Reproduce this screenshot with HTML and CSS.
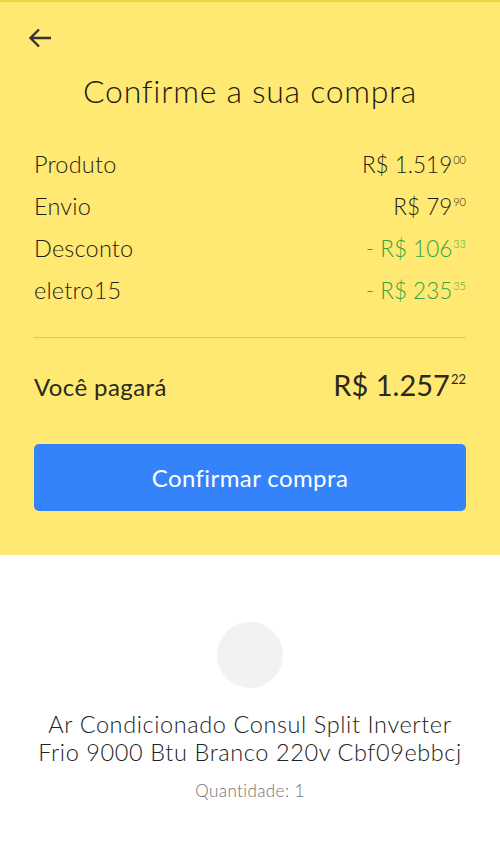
FILE: index.html
```html
<!DOCTYPE html>
<html lang="pt-BR">
<head>
<meta charset="utf-8">
<title>Confirme a sua compra</title>
<link rel="stylesheet" href="styles.css">
</head>
<body>
<div class="page">
  <section class="summary">
    <div class="topbar">
      <button class="back" aria-label="Voltar">
        <svg width="24" height="24" viewBox="0 0 24 24"><path d="M23 12H2.5M11 3.5L2.5 12L11 20.5" fill="none" stroke="#333" stroke-width="2.4"/></svg>
      </button>
    </div>
    <h1 class="title">Confirme a sua compra</h1>
    <ul class="lines">
      <li class="line"><span>Produto</span><span class="amt">R$ 1.519<sup>00</sup></span></li>
      <li class="line"><span>Envio</span><span class="amt">R$ 79<sup>90</sup></span></li>
      <li class="line"><span>Desconto</span><span class="amt green">- R$ 106<sup>33</sup></span></li>
      <li class="line"><span>eletro15</span><span class="amt green">- R$ 235<sup>35</sup></span></li>
    </ul>
    <div class="total">
      <span class="total-label">Você pagará</span>
      <span class="total-amt">R$ 1.257<sup>22</sup></span>
    </div>
    <button class="confirm">Confirmar compra</button>
  </section>
  <section class="product">
    <div class="thumb"></div>
    <p class="name">Ar Condicionado Consul Split Inverter Frio 9000 Btu Branco 220v Cbf09ebbcj</p>
    <p class="qty">Quantidade: 1</p>
  </section>
</div>
</body>
</html>
```

FILE: styles.css
```css
* { box-sizing: border-box; }
html, body { margin: 0; padding: 0; background: #fff; }
body { font-family: "Lato", "Open Sans", sans-serif; color: #333; }
.page { width: 500px; }
.summary {
  background: #ffe972;
  border-top: 2px solid #f2d43c;
  padding: 0 34px 44px;
  display: flex;
  flex-direction: column;
}
.topbar { height: 76px; display: flex; align-items: center; margin-top: -2px; }
.back { background: none; border: 0; padding: 0; margin-left: -6px; width: 24px; height: 24px; display: flex; }
.title {
  margin: -3px 0 0;
  text-align: center;
  font-weight: 300;
  font-size: 32px;
  line-height: 36px;
  color: #1c1b12;
  letter-spacing: 0.7px;
}
.lines { list-style: none; margin: 34px 0 0; padding: 0 0 26px; border-bottom: 1px solid #d8c56a; }
.line {
  display: flex;
  justify-content: space-between;
  align-items: baseline;
  height: 42px;
  line-height: 42px;
  font-size: 23.5px;
  font-weight: 300;
  color: #1f1e14;
  letter-spacing: 0.2px;
}
.amt { font-size: 22.5px; letter-spacing: 0; }
.amt sup, .total-amt sup { font-size: 11px; vertical-align: 9px; line-height: 0; margin-left: 1px; }
.green { color: #35a641; }
.total {
  display: flex;
  justify-content: space-between;
  align-items: baseline;
  height: 96px;
  padding-top: 32px;
  line-height: 30px;
}
.total-label { font-size: 24px; font-weight: 400; color: #2a2920; letter-spacing: 0.4px; }
.total-amt { font-size: 29px; font-weight: 400; color: #2a2920; }
.total-amt sup { font-size: 13px; vertical-align: 12px; }
.confirm {
  height: 67px;
  border: 0;
  border-radius: 5px;
  background: #3483fa;
  color: #fff;
  font-family: inherit;
  font-size: 24px;
  letter-spacing: 0.4px;
  margin-top: 10px;
}
.product {
  display: flex;
  flex-direction: column;
  align-items: center;
  padding-top: 67px;
  text-align: center;
}
.thumb { width: 66px; height: 66px; border-radius: 50%; background: #f2f2f2; }
.name {
  margin: 22px 0 0;
  font-size: 23.5px;
  font-weight: 300;
  line-height: 28px;
  color: #222;
  padding: 0 28px;
  letter-spacing: 0.6px;
}
.qty { margin: 14px 0 0; font-size: 17px; font-weight: 300; color: #6f6f6f; letter-spacing: 0.4px; }
```
